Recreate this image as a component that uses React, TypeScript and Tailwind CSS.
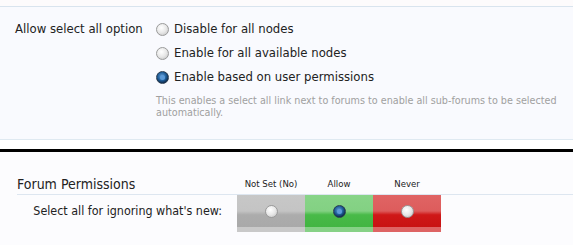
import React from "react";

function Radio({ checked }: { checked?: boolean }) {
  return (
    <span
      className={
        "inline-flex items-center justify-center w-[13px] h-[13px] rounded-full border shrink-0 " +
        (checked
          ? "border-[#2b3d52] bg-[radial-gradient(circle_at_45%_40%,#6fa3d6_0%,#1f5f9c_45%,#0d2a4a_75%)]"
          : "border-[#9a9a9a] bg-[radial-gradient(circle_at_40%_35%,#ffffff_0%,#e8e8e8_50%,#bdbdbd_100%)]")
      }
    >
      {checked ? <span className="w-[5px] h-[5px] rounded-full bg-[#5c9ad8]" /> : null}
    </span>
  );
}

export default function App() {
  const font = { fontFamily: "Tahoma, 'DejaVu Sans Condensed', 'Liberation Sans', sans-serif" };
  return (
    <div className="w-[573px] h-[245px] overflow-hidden bg-[#f9fafe] text-[#222]" style={font}>
      <div className="h-[6px] bg-[#fdfbfc]" />
      <div className="h-px bg-[#d9e4ee]" />
      <div className="flex pt-[10px] pb-[20px]">
        <div className="w-[156px] pl-[15px] h-[24px] flex items-center text-[13px]">Allow select all option</div>
        <div className="flex-1">
          {["Disable for all nodes", "Enable for all available nodes", "Enable based on user permissions"].map(
            (t, i) => (
              <div key={t} className="h-[24px] flex items-center gap-[5px] text-[13px]">
                <Radio checked={i === 2} />
                <span>{t}</span>
              </div>
            )
          )}
          <div className="mt-[6px] text-[10.7px] leading-[12px] text-[#a0a0a0] w-[410px]">
            This enables a select all link next to forums to enable all sub-forums to be selected automatically.
          </div>
        </div>
      </div>
      <div className="h-px bg-[#dfe9f1]" />
      <div className="h-[9px] bg-white" />
      <div className="h-[3px] bg-black" />
      <div className="bg-[#fcfcfe] h-[93px]">
        <div className="ml-[17px] pt-[24px] flex items-end border-b border-[#dde6f0] h-[43px]">
          <div className="w-[220px] text-[14px] leading-[17px] pb-[1px]">Forum Permissions</div>
          {["Not Set (No)", "Allow", "Never"].map((t) => (
            <div key={t} className="w-[68px] text-center text-[9.5px] leading-[12px] pb-[4px]">
              {t}
            </div>
          ))}
        </div>
        <div className="flex">
          <div className="w-[222px] h-[32px] flex items-center justify-end text-[12.4px]">
            Select all for ignoring what's new:
          </div>
          <div className="ml-[15px] flex">
            <div className="w-[68px] flex flex-col">
              <div className="h-[32px] flex items-center justify-center bg-[linear-gradient(to_bottom,#c7c7c7_0%,#c4c4c4_50%,#acacac_62%,#a9a9a9_100%)]">
                <Radio />
              </div>
              <div className="h-[5px] bg-[#c9c9c9]" />
            </div>
            <div className="w-[68px] flex flex-col">
              <div className="h-[32px] flex items-center justify-center bg-[linear-gradient(to_bottom,#88d488_0%,#83d183_50%,#48ba48_62%,#42b542_100%)]">
                <Radio checked />
              </div>
              <div className="h-[5px] bg-[#86d186]" />
            </div>
            <div className="w-[68px] flex flex-col">
              <div className="h-[32px] flex items-center justify-center bg-[linear-gradient(to_bottom,#e06464_0%,#dd5c5c_50%,#cf1818_62%,#c81212_100%)]">
                <Radio />
              </div>
              <div className="h-[5px] bg-[#de6464]" />
            </div>
          </div>
        </div>
      </div>
    </div>
  );
}
